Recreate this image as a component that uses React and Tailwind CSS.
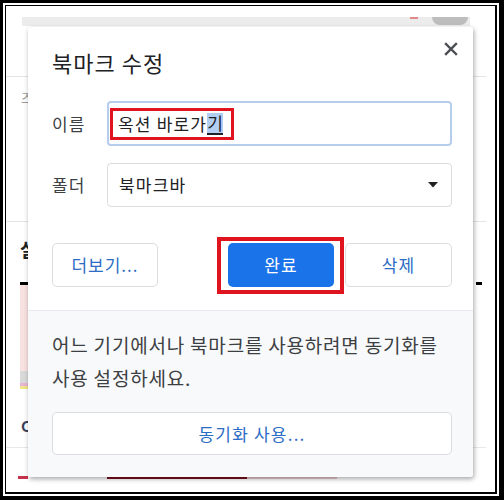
export default function App() {
  const font = { fontFamily: '"Noto Sans CJK KR", "Noto Sans", sans-serif' };
  return (
    <div
      className="w-[504px] h-[500px] bg-white border-solid border-black border-t-[3px] border-l-[3px] border-r-[5px] border-b-[4px] p-[2px]"
      style={font}
    >
      <div className="relative h-full overflow-hidden bg-white border-solid border-black border-t border-l border-r-2 border-b-2">
        {/* background page */}
        <div className="flex flex-col">
          <div className="h-[11px]" />
          <div className="ml-[16px] w-[448px] h-[9px] bg-[#ececec] flex items-start">
            <div className="ml-[388px] w-[8px] h-[2px] bg-[#e08a8a]" />
            <div className="ml-[14px] w-[36px] h-[8px] rounded-b-full bg-[#bdbdbd]" />
          </div>
          <div className="mt-[50px] w-[480px] h-px bg-[#e4e4e4]" />
          <div className="mt-[12px] pl-[15px] text-[13px] leading-[18px] text-[#9a9a9a]">즈</div>
          <div className="mt-[114px] w-[480px] h-px bg-[#e4e4e4]" />
          <div className="mt-[16px] pl-[14px] text-[18px] leading-[22px] font-bold text-[#222]">실</div>
          <div className="mt-[22px] flex">
            <div className="ml-[14px] w-[8px] h-[3px] bg-black" />
            <div className="ml-[448px] w-[6px] h-[3px] bg-black" />
          </div>
          <div className="ml-[14px] w-[8px] h-[86px] bg-[#f8e1e1]" />
          <div className="ml-[14px] w-[8px] h-[12px] bg-[#d9d9d9]" />
          <div className="ml-[14px] w-[8px] h-[3px] bg-[#e7b5d3]" />
          <div className="ml-[14px] w-[8px] h-[3px] bg-[#efe58a]" />
          <div className="mt-[28px] pl-[15px] text-[15px] leading-[18px] font-bold text-[#3b3f5c]">C</div>
          <div className="mt-[12px] w-[480px] h-px bg-[#e8e8e8]" />
          <div className="mt-[28px] flex items-center">
            <div className="ml-[12px] w-[10px] h-[3px] bg-[#c8324a]" />
            <div className="ml-[79px] w-[140px] h-[3px] bg-[#7a0f1e]" />
            <div className="w-[90px] h-[3px] bg-[#e9c8cc]" />
          </div>
        </div>

        {/* dialog */}
        <div className="absolute left-[22px] top-[21px] w-[445px] h-[450px] bg-white rounded-[3px] shadow-[1px_2px_5px_rgba(0,0,0,0.35)] flex flex-col overflow-hidden">
          <div className="flex items-start justify-between pl-[24px] pr-[15px]">
            <div className="mt-[21px] text-[22px] leading-[28px] tracking-[1px] text-[#202124]">북마크 수정</div>
            <svg className="mt-[15px]" width="14" height="14" viewBox="0 0 14 14">
              <path d="M2 2 L12 12 M12 2 L2 12" stroke="#4a4d52" strokeWidth="2.4" strokeLinecap="square" />
            </svg>
          </div>

          <div className="mt-[25px] flex items-center pl-[24px]">
            <div className="w-[55px] text-[17px] tracking-[1.2px] text-[#3c4043]">이름</div>
            <div className="w-[345px] h-[45px] rounded-[4px] border-2 border-[#b6cdec] flex items-center pl-[1px]">
              <span className="inline-flex items-center h-[32px] border-[3px] border-[#e0141e] pl-[5px] pr-[8px] text-[17px] leading-[22px] tracking-[1.2px] text-[#202124]">
                옥션 바로가<span className="bg-[#b2cff3] border-b-2 border-[#202124] leading-[20px] tracking-normal">기</span>
              </span>
            </div>
          </div>

          <div className="mt-[17px] flex items-center pl-[24px]">
            <div className="w-[55px] text-[17px] tracking-[1.2px] text-[#3c4043]">폴더</div>
            <div className="w-[345px] h-[44px] rounded-[4px] border border-[#dadce0] flex items-center justify-between pl-[11px] pr-[13px]">
              <span className="text-[17px] tracking-[1.2px] text-[#202124]">북마크바</span>
              <svg width="10" height="6" viewBox="0 0 10 6">
                <path d="M0 0 L10 0 L5 5.5 Z" fill="#202124" />
              </svg>
            </div>
          </div>

          <div className="relative mt-[36px] flex pl-[24px]">
            <div className="w-[106px] h-[44px] rounded-[5px] border border-[#dadce0] flex items-center justify-center text-[17px] tracking-[1px] text-[#2c6cc4]">
              더보기...
            </div>
            <div className="ml-[70px] w-[106px] h-[44px] rounded-[5px] bg-[#1a73e8] flex items-center justify-center text-[17px] tracking-[1.2px] text-white">
              완료
            </div>
            <div className="ml-[11px] w-[107px] h-[44px] rounded-[5px] border border-[#dadce0] flex items-center justify-center text-[17px] tracking-[1.2px] text-[#2c6cc4]">
              삭제
            </div>
            <div className="absolute left-[189px] top-[-6px] w-[127px] h-[57px] border-[4px] border-[#e0141e]" />
          </div>

          <div className="mt-[23px] flex-1 bg-[#f8f9fa] border-t border-[#e8eaed] px-[24px] pt-[17px]">
            <div className="text-[19px] leading-[33px] tracking-[0.8px] text-[#3c4043] whitespace-nowrap">
              어느 기기에서나 북마크를 사용하려면 동기화를
              <br />
              사용 설정하세요.
            </div>
            <div className="mt-[18px] w-[400px] h-[43px] rounded-[5px] border border-[#dadce0] bg-white flex items-center justify-center text-[17px] tracking-[1.2px] text-[#2c6cc4]">
              동기화 사용...
            </div>
          </div>
        </div>
      </div>
    </div>
  );
}
